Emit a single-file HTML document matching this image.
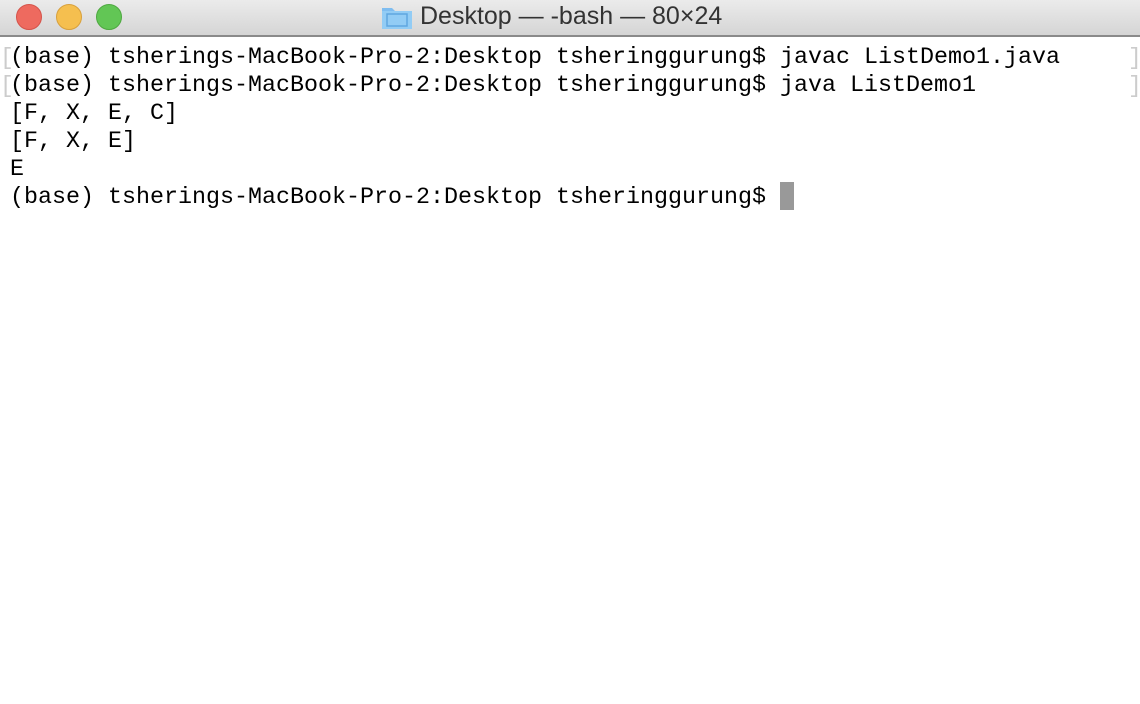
<!DOCTYPE html><html><head><style>
body{margin:0;width:1140px;height:704px;background:#fff;overflow:hidden;position:relative}
.tb{position:absolute;left:0;top:0;width:1140px;height:35px;background:linear-gradient(#ebebeb,#d5d5d5);border-bottom:2px solid #8a8a8a}
.d{position:absolute;top:4px;width:24px;height:24px;border-radius:50%}
.title{position:absolute;left:420px;top:2px;font:25px "Liberation Sans",sans-serif;color:#333}
.term{position:absolute;left:10px;top:44px;font:23.33px/28px "Liberation Mono",monospace;color:#000;white-space:pre}
.br{position:absolute;font:23px/28px "Liberation Mono",monospace;color:#ccc}
.cur{position:absolute;left:780px;top:182px;width:14px;height:28px;background:#999}
</style></head><body>
<div class="tb">
<div class="d" style="left:16px;background:#ee6a5f;border:1px solid #d5534a"></div>
<div class="d" style="left:56px;background:#f5bf4f;border:1px solid #d8a03c"></div>
<div class="d" style="left:96px;background:#62c655;border:1px solid #4ea840"></div>
<svg style="position:absolute;left:381px;top:4px" width="32" height="26"><path d="M1 4h10l3 3h17v18H1z" fill="#7fbdf0"/><rect x="1" y="7" width="30" height="18" fill="#92ccf5"/><rect x="6" y="10" width="20" height="12" fill="none" stroke="#5fa6e0" stroke-width="1.5"/></svg>
<div class="title">Desktop — -bash — 80×24</div>
</div>
<div class="br" style="left:0;top:44px">[</div><div class="br" style="left:0;top:72px">[</div>
<div class="br" style="left:1128px;top:44px">]</div><div class="br" style="left:1128px;top:72px">]</div>
<div class="term">(base) tsherings-MacBook-Pro-2:Desktop tsheringgurung$ javac ListDemo1.java
(base) tsherings-MacBook-Pro-2:Desktop tsheringgurung$ java ListDemo1
[F, X, E, C]
[F, X, E]
E
(base) tsherings-MacBook-Pro-2:Desktop tsheringgurung$ </div>
<div class="cur"></div>
</body></html>
